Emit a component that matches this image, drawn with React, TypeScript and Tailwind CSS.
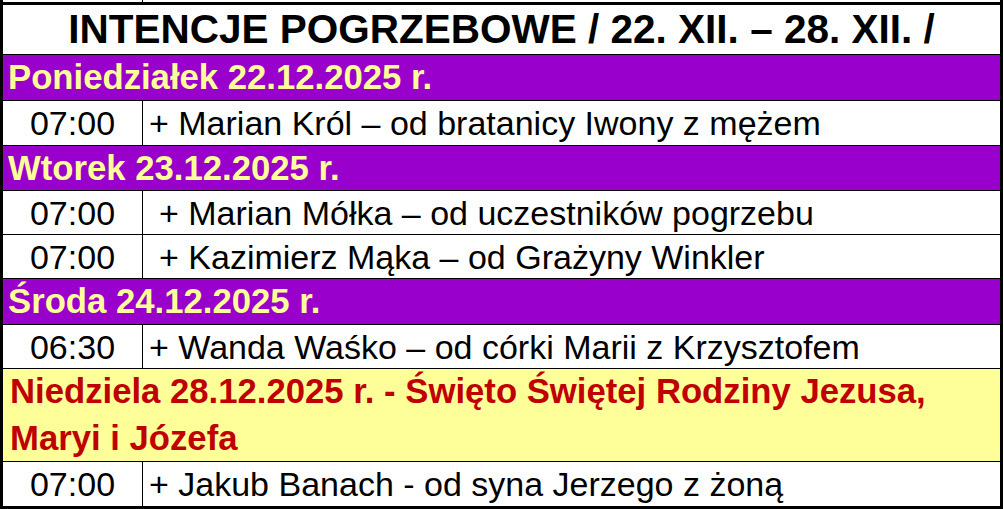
import React from 'react';

type Row =
  | { kind: 'day'; text: string; h: string }
  | { kind: 'feast'; lines: string[]; h: string }
  | { kind: 'mass'; time: string; text: string; h: string; indent?: boolean };

const rows: Row[] = [
  { kind: 'day', text: 'Poniedziałek 22.12.2025 r.', h: 'h-[46px]' },
  { kind: 'mass', time: '07:00', text: '+ Marian Król – od bratanicy Iwony z mężem', h: 'h-[45px]' },
  { kind: 'day', text: 'Wtorek 23.12.2025 r.', h: 'h-[45px]' },
  { kind: 'mass', time: '07:00', text: '+ Marian Mółka – od uczestników pogrzebu', h: 'h-[44px]', indent: true },
  { kind: 'mass', time: '07:00', text: '+ Kazimierz Mąka – od Grażyny Winkler', h: 'h-[44px]', indent: true },
  { kind: 'day', text: 'Środa 24.12.2025 r.', h: 'h-[46px]' },
  { kind: 'mass', time: '06:30', text: '+ Wanda Waśko – od córki Marii z Krzysztofem', h: 'h-[44px]' },
  {
    kind: 'feast',
    lines: ['Niedziela 28.12.2025 r. - Święto Świętej Rodziny Jezusa,', 'Maryi i Józefa'],
    h: 'h-[93px]',
  },
  { kind: 'mass', time: '07:00', text: '+ Jakub Banach - od syna Jerzego z żoną', h: 'h-[44px]' },
];

export default function App() {
  return (
    <div className="w-[1004px] h-[509px] bg-white font-['Liberation_Sans',Arial,sans-serif] text-black overflow-hidden">
      {/* tail of the previous sheet row */}
      <div className="flex h-[2px] w-[1003px] border-l-[3px] border-r-[3px] border-black">
        <div className="w-[140px] border-r border-black" />
      </div>

      <div className="w-[1003px] border-[3px] border-black">
        <div className="h-[50px] border-b border-black flex items-center justify-center">
          <span className="text-[40.5px] font-bold leading-none">
            INTENCJE POGRZEBOWE / 22. XII. – 28. XII. /
          </span>
        </div>

        {rows.map((r, i) => {
          const last = i === rows.length - 1;
          const line = last ? '' : 'border-b border-black';
          if (r.kind === 'day') {
            return (
              <div key={i} className={`${r.h} ${line} bg-[#9900cc] flex items-center px-[5px]`}>
                <span className="text-[34.7px] font-bold leading-none text-[#ffff99]">{r.text}</span>
              </div>
            );
          }
          if (r.kind === 'feast') {
            return (
              <div key={i} className={`${r.h} ${line} bg-[#ffff99] flex flex-col justify-center px-[7px]`}>
                {r.lines.map((l) => (
                  <div key={l} className="text-[34.7px] font-bold leading-[47px] text-[#c00000]">
                    {l}
                  </div>
                ))}
              </div>
            );
          }
          return (
            <div key={i} className={`${r.h} ${line} flex`}>
              <div className="w-[140px] border-r border-black flex items-center justify-center text-[34px] leading-none">
                {r.time}
              </div>
              <div className={`flex-1 flex items-center text-[34px] leading-none ${r.indent ? 'pl-[16px]' : 'pl-[6px]'}`}>
                {r.text}
              </div>
            </div>
          );
        })}
      </div>
    </div>
  );
}
